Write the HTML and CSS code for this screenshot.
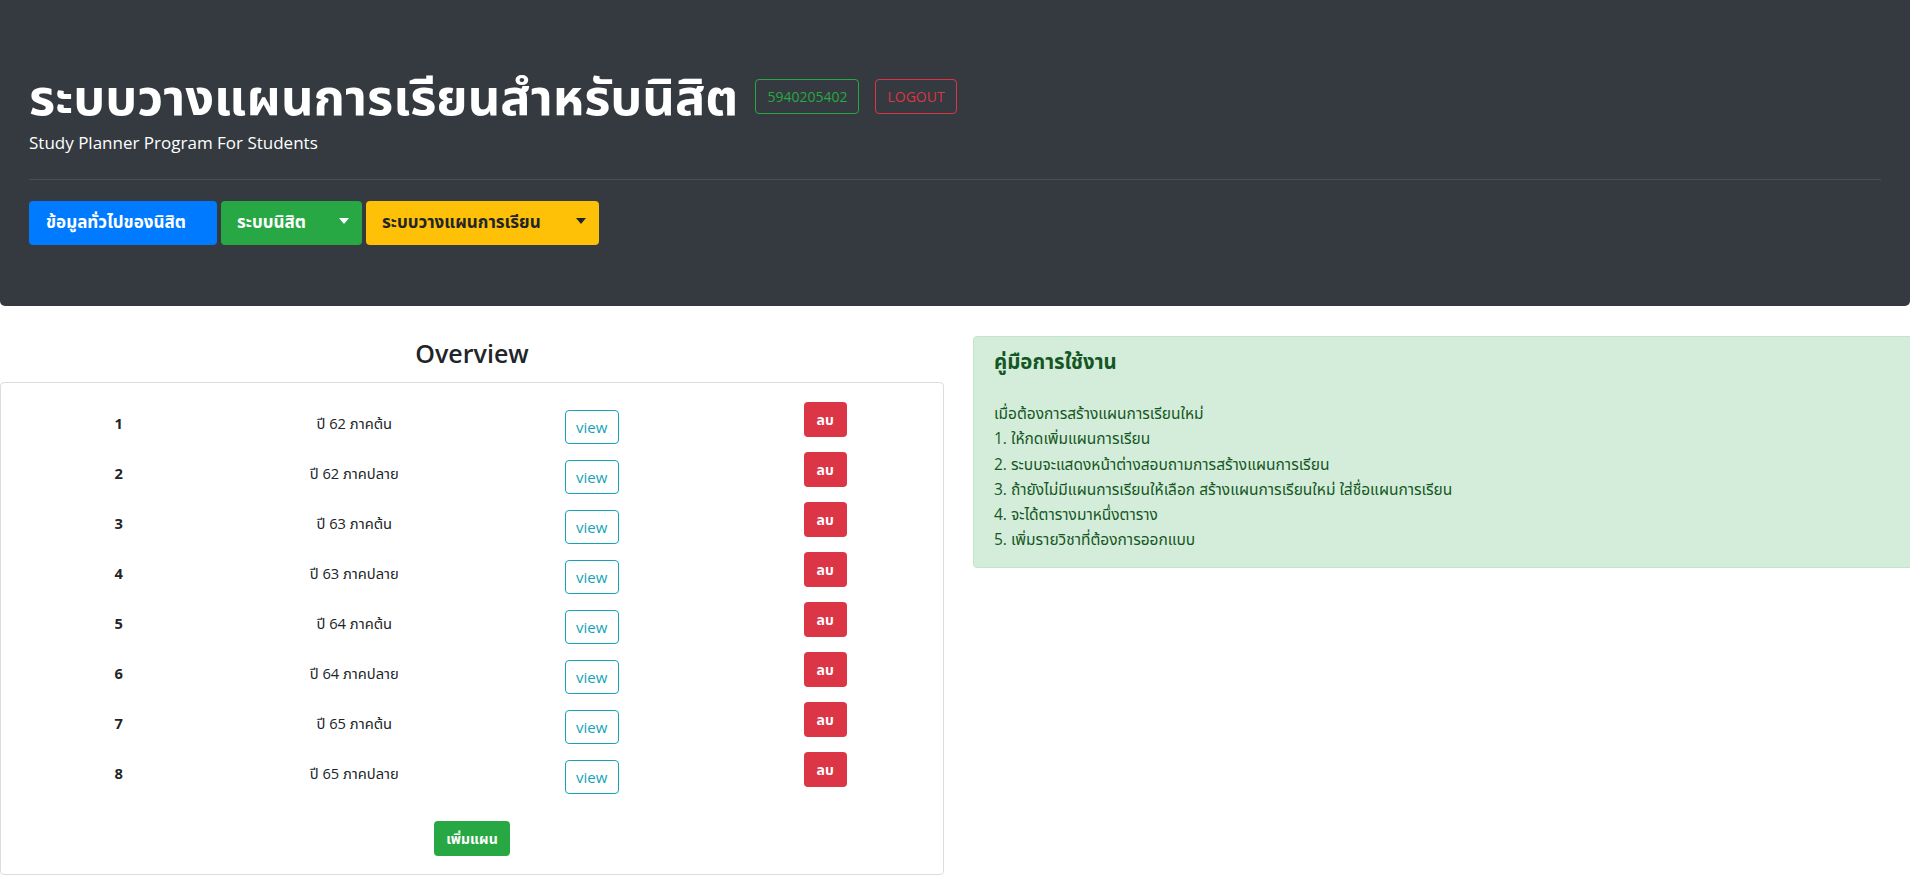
FILE: index.html
```html
<!DOCTYPE html>
<html lang="th">
<head>
<meta charset="utf-8">
<title>Study Planner</title>
<link rel="stylesheet" href="styles.css">
</head>
<body>
<header class="hero">
  <div class="title-row">
    <h1 class="title">ระบบวางแผนการเรียนสำหรับนิสิต</h1>
    <span class="chip chip-green">5940205402</span>
    <span class="chip chip-red">LOGOUT</span>
  </div>
  <p class="lead">Study Planner Program For Students</p>
  <hr class="sep">
  <nav class="menu">
    <a class="btn btn-blue">ข้อมูลทั่วไปของนิสิต</a>
    <div class="split btn-green">
      <span class="split-main">ระบบนิสิต</span>
      <span class="split-toggle"><span class="caret"></span></span>
    </div>
    <div class="split btn-yellow">
      <span class="split-main">ระบบวางแผนการเรียน</span>
      <span class="split-toggle"><span class="caret"></span></span>
    </div>
  </nav>
</header>

<main class="content">
  <section class="left">
    <h3 class="overview">Overview</h3>
    <div class="card">
      <div class="row"><span class="cell num">1</span><span class="cell">ปี 62 ภาคต้น</span><span class="cell"><a class="view">view</a></span><span class="cell"><a class="del">ลบ</a></span></div>
      <div class="row"><span class="cell num">2</span><span class="cell">ปี 62 ภาคปลาย</span><span class="cell"><a class="view">view</a></span><span class="cell"><a class="del">ลบ</a></span></div>
      <div class="row"><span class="cell num">3</span><span class="cell">ปี 63 ภาคต้น</span><span class="cell"><a class="view">view</a></span><span class="cell"><a class="del">ลบ</a></span></div>
      <div class="row"><span class="cell num">4</span><span class="cell">ปี 63 ภาคปลาย</span><span class="cell"><a class="view">view</a></span><span class="cell"><a class="del">ลบ</a></span></div>
      <div class="row"><span class="cell num">5</span><span class="cell">ปี 64 ภาคต้น</span><span class="cell"><a class="view">view</a></span><span class="cell"><a class="del">ลบ</a></span></div>
      <div class="row"><span class="cell num">6</span><span class="cell">ปี 64 ภาคปลาย</span><span class="cell"><a class="view">view</a></span><span class="cell"><a class="del">ลบ</a></span></div>
      <div class="row"><span class="cell num">7</span><span class="cell">ปี 65 ภาคต้น</span><span class="cell"><a class="view">view</a></span><span class="cell"><a class="del">ลบ</a></span></div>
      <div class="row"><span class="cell num">8</span><span class="cell">ปี 65 ภาคปลาย</span><span class="cell"><a class="view">view</a></span><span class="cell"><a class="del">ลบ</a></span></div>
      <div class="add-row"><a class="add">เพิ่มแผน</a></div>
    </div>
  </section>
  <aside class="right">
    <div class="alert">
      <h5 class="alert-title">คู่มือการใช้งาน</h5>
      <div class="guide">
        <p>เมื่อต้องการสร้างแผนการเรียนใหม่</p>
        <p>1. ให้กดเพิ่มแผนการเรียน</p>
        <p>2. ระบบจะแสดงหน้าต่างสอบถามการสร้างแผนการเรียน</p>
        <p>3. ถ้ายังไม่มีแผนการเรียนให้เลือก สร้างแผนการเรียนใหม่ ใส่ชื่อแผนการเรียน</p>
        <p>4. จะได้ตารางมาหนึ่งตาราง</p>
        <p>5. เพิ่มรายวิชาที่ต้องการออกแบบ</p>
      </div>
    </div>
  </aside>
</main>
</body>
</html>
```

FILE: styles.css
```css
html, body {
  margin: 0;
  padding: 0;
  overflow: hidden;
}
body {
  font-family: "Open Sans", "Noto Sans", "Noto Sans Thai", sans-serif;
  color: #212529;
  background: #fff;
  width: 1910px;
}
.hero {
  background: #343a40;
  padding: 64px 29px 61px;
  border-radius: 0 0 5px 5px;
}
.title-row {
  display: flex;
  align-items: center;
  height: 64px;
}
.title {
  margin: 0 17px 0 0;
  color: #fff;
  font-size: 50.5px;
  font-weight: 700;
  line-height: 64px;
}
.chip {
  display: inline-block;
  box-sizing: border-box;
  height: 35px;
  line-height: 33px;
  padding: 0 11px;
  font-size: 14px;
  border: 1px solid;
  border-radius: 4px;
  margin-right: 16px;
}
.chip-green { color: #28a745; border-color: #28a745; }
.chip-red { color: #dc3545; border-color: #dc3545; }
.lead {
  margin: 3px 0 0;
  color: #fff;
  font-size: 17px;
  line-height: 24px;
  font-weight: 400;
}
.sep {
  margin: 24px 0 21px;
  border: 0;
  border-top: 1px solid rgba(255,255,255,0.1);
}
.menu {
  display: flex;
  gap: 4px;
}
.btn, .split {
  box-sizing: border-box;
  height: 44px;
  border-radius: 4px;
  font-size: 17px;
  font-weight: 700;
  display: flex;
  align-items: center;
}
.btn {
  padding: 0 17px;
}
.btn-blue { background: #007bff; color: #fff; width: 188px; }
.btn-green { background: #28a745; color: #fff; width: 141px; }
.btn-yellow { background: #ffc107; color: #212529; width: 233px; }
.split-main {
  padding-left: 16px;
  flex: 1;
}
.split-toggle {
  display: flex;
  align-items: center;
  padding: 0 13px 4px 12px;
}
.caret {
  width: 0;
  height: 0;
  border-top: 6px solid currentColor;
  border-left: 5.5px solid transparent;
  border-right: 5.5px solid transparent;
}
.content {
  display: flex;
  gap: 29px;
  margin-top: 30px;
}
.left {
  width: 944px;
  flex: none;
}
.overview {
  margin: 0 0 12px;
  text-align: center;
  font-size: 25px;
  font-weight: 600;
  line-height: 34px;
}
.card {
  box-sizing: border-box;
  border: 1px solid #dcdcdc;
  border-radius: 4px;
  padding: 15px 0 18px;
}
.row {
  display: grid;
  grid-template-columns: repeat(4, 1fr);
  height: 50px;
  font-size: 14.7px;
}
.cell {
  text-align: center;
  line-height: 50px;
}
.num { font-weight: 700; }
.view, .del, .add {
  display: inline-block;
  box-sizing: border-box;
  border-radius: 4px;
  vertical-align: top;
}
.view {
  margin-top: 12px;
  margin-left: 4px;
  width: 54px;
  height: 34px;
  line-height: 32px;
  border: 1px solid #17a2b8;
  color: #17a2b8;
  font-size: 15px;
}
.del {
  margin-top: 4px;
  width: 43px;
  height: 35px;
  line-height: 35px;
  background: #dc3545;
  color: #fff;
  font-weight: 700;
  font-size: 14px;
}
.add-row {
  text-align: center;
  margin-top: 23px;
}
.add {
  width: 76px;
  height: 35px;
  line-height: 35px;
  background: #28a745;
  color: #fff;
  font-weight: 700;
  font-size: 14px;
}
.right {
  width: 960px;
  flex: none;
}
.alert {
  box-sizing: border-box;
  background: #d4edda;
  border: 1px solid #c3e6cb;
  border-radius: 4px;
  color: #155724;
  padding: 12px 20px 14px;
}
.alert-title {
  margin: 0 0 28px;
  font-size: 20.4px;
  font-weight: 700;
  line-height: 24px;
}
.guide p {
  margin: 0;
  font-size: 15.5px;
  line-height: 25.3px;
}
```
